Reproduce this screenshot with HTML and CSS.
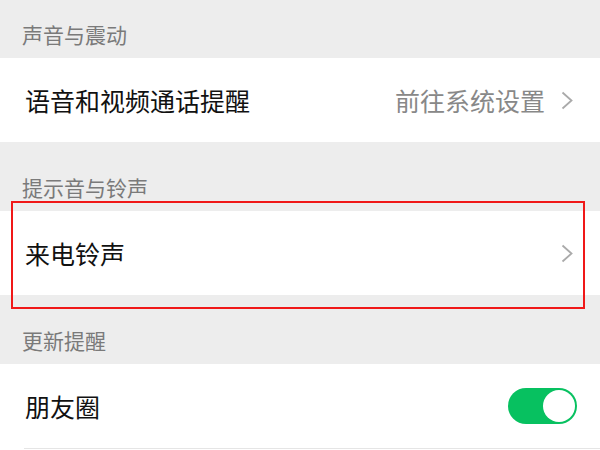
FILE: index.html
```html
<!DOCTYPE html>
<html lang="zh-CN">
<head>
  <meta charset="UTF-8" />
  <meta name="viewport" content="width=device-width, initial-scale=1.0"/>
  <title>新消息提醒</title>
  <link rel="stylesheet" href="styles.css">
</head>
<body>

  <div class="group-title first">声音与震动</div>
  <div class="cell">
    <span class="cell-label">语音和视频通话提醒</span>
    <span class="cell-value">前往系统设置</span>
    <svg class="arrow" width="12" height="19" viewBox="0 0 12 19">
      <path d="M1.5 1.5 L10.5 9.5 L1.5 17.5" fill="none" stroke="#aaaaaa" stroke-width="1.8"/>
    </svg>
  </div>

  <div class="group-title">提示音与铃声</div>
  <div class="cell">
    <span class="cell-label">来电铃声</span>
    <svg class="arrow" width="12" height="19" viewBox="0 0 12 19">
      <path d="M1.5 1.5 L10.5 9.5 L1.5 17.5" fill="none" stroke="#aaaaaa" stroke-width="1.8"/>
    </svg>
  </div>

  <div class="group-title">更新提醒</div>
  <div class="cell with-line">
    <span class="cell-label">朋友圈</span>
    <div class="switch on"><div class="knob"></div></div>
  </div>
  <div class="cell-rest"></div>

  <!-- annotation box -->
  <div class="mark"></div>

</body>
</html>
```

FILE: styles.css
```css
body {
  margin: 0;
  background-color: #ededed;
  font-family: "Noto Sans CJK SC", "Noto Sans", sans-serif;
  position: relative;
  overflow: hidden;
  height: 450px;
}
.group-title {
  height: 69px;
  box-sizing: border-box;
  display: flex;
  align-items: flex-end;
  padding: 0 0 12px 22px;
  font-size: 21px;
  line-height: 24px;
  color: #7a7a7a;
}
.group-title.first { height: 58px; }
.cell {
  height: 84px;
  background: #fff;
  display: flex;
  align-items: center;
  padding: 0 27px 0 25px;
  position: relative;
}
.cell-label {
  flex: 1;
  font-size: 25px;
  color: #111;
}
.cell-value {
  font-size: 25px;
  color: #888;
  margin-right: 16px;
}
.arrow { display: block; }
.with-line {
  padding-right: 23px;
  border-bottom: 1px solid #e5e5e5;
  margin-left: 24px;
  padding-left: 1px;
  box-shadow: -24px 0 0 #fff;
}
.cell-rest {
  height: 10px;
  background: #fff;
}
.switch {
  width: 69px;
  height: 36px;
  border-radius: 18px;
  background: #07c160;
  box-sizing: border-box;
  padding: 2px;
  display: flex;
  justify-content: flex-end;
}
.knob {
  width: 32px;
  height: 32px;
  border-radius: 50%;
  background: #fff;
}
.mark {
  position: absolute;
  left: 11px;
  top: 201px;
  width: 570px;
  height: 104px;
  border: 2px solid #f01818;
}
```
